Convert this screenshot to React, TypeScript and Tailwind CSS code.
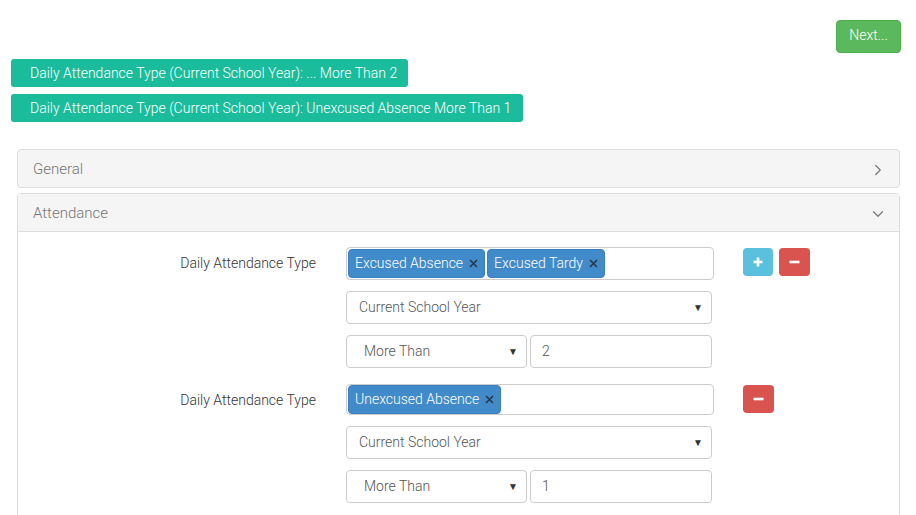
import { ChevronRight, ChevronDown } from "lucide-react"

const font = { fontFamily: "Roboto, 'Liberation Sans', sans-serif" }

function Chip({ label }: { label: string }) {
  return (
    <span className="flex h-[29px] items-center rounded-[4px] border border-[#3a7fc0] bg-[#428bca] pl-[6px] pr-[6px] text-[14px] text-white">
      {label}
      <svg className="ml-[6px]" width="9" height="9" viewBox="0 0 9 9">
        <path d="M1 1l7 7M8 1l-7 7" stroke="#24384c" strokeWidth="1.6" />
      </svg>
    </span>
  )
}

function Select({ value, className }: { value: string; className: string }) {
  return (
    <div
      className={`flex h-[33px] items-center justify-between rounded-[4px] border border-[#ccc] bg-white pr-[8px] text-[14px] text-[#555] ${className}`}
    >
      <span>{value}</span>
      <span className="text-[10px] text-[#333]">▼</span>
    </div>
  )
}

function Criteria({ chips, value, plus, boxH }: { chips: string[]; value: string; plus?: boolean; boxH: string }) {
  return (
    <div className="flex">
      <div className="w-[298px] shrink-0 pt-[6px] text-right text-[14px] text-[#333]">Daily Attendance Type</div>
      <div className="ml-[30px] flex w-[368px] flex-col gap-[11px]">
        <div className={`flex items-center gap-[2px] rounded-[4px] border border-[#ccc] bg-white px-[1px] ${boxH}`}>
          {chips.map((c) => (
            <Chip key={c} label={c} />
          ))}
        </div>
        <Select value="Current School Year" className="w-[366px] pl-[12px]" />
        <div className="flex gap-[3px]">
          <Select value="More Than" className="w-[181px] pl-[17px]" />
          <div className="flex h-[33px] w-[182px] items-center rounded-[4px] border border-[#ccc] bg-white pl-[11px] text-[14px] text-[#555]">
            {value}
          </div>
        </div>
      </div>
      <div className="ml-[29px] flex gap-[6px] pt-[1px]">
        {plus && (
          <button className="flex h-[28px] w-[30px] items-center justify-center rounded-[4px] bg-[#5bc0de] text-white">
            <svg width="10" height="10" viewBox="0 0 10 10">
              <path d="M5 0.5v9M0.5 5h9" stroke="white" strokeWidth="2.6" />
            </svg>
          </button>
        )}
        <button className="flex h-[28px] w-[31px] items-center justify-center rounded-[4px] bg-[#d9534f] text-white">
          <svg width="11" height="10" viewBox="0 0 11 10">
            <path d="M0.5 5h10" stroke="white" strokeWidth="2.6" />
          </svg>
        </button>
      </div>
    </div>
  )
}

export default function App() {
  return (
    <div className="min-h-[515px] w-full overflow-hidden bg-white font-light" style={font}>
      <div className="flex justify-end pr-[15px] pt-[20px]">
        <button className="h-[33px] w-[65px] rounded-[4px] border border-[#4cae4c] bg-[#5cb85c] pb-[2px] text-[14px] text-white">
          Next...
        </button>
      </div>

      <div className="mt-[6px] flex flex-col items-start gap-[7px] pl-[11px]">
        <span className="flex h-[28px] items-center rounded-[3px] bg-[#1abc9c] pl-[19px] pr-[11px] text-[14px] text-white">
          Daily Attendance Type (Current School Year): ... More Than 2
        </span>
        <span className="flex h-[28px] items-center rounded-[3px] bg-[#1abc9c] pl-[19px] pr-[12px] text-[14px] text-white">
          Daily Attendance Type (Current School Year): Unexcused Absence More Than 1
        </span>
      </div>

      <div className="ml-[17px] mr-[16px] mt-[27px] flex flex-col gap-[5px]">
        <div className="flex h-[39px] items-center justify-between rounded-[4px] border border-[#ddd] bg-[#f5f5f5] pl-[15px] pr-[12px] pt-[2px] text-[15px] text-[#777]">
          <span>General</span>
          <ChevronRight size={18} strokeWidth={1.6} color="#777" />
        </div>
        <div className="rounded-t-[4px] border border-[#ddd]">
          <div className="flex h-[38px] items-center justify-between border-b border-[#ddd] bg-[#f5f5f5] pl-[15px] pr-[12px] pt-[2px] text-[15px] text-[#777]">
            <span>Attendance</span>
            <ChevronDown size={18} strokeWidth={1.6} color="#777" />
          </div>
          <div className="flex flex-col gap-[16px] pb-[20px] pt-[15px]">
            <Criteria chips={["Excused Absence", "Excused Tardy"]} value="2" plus boxH="h-[33px]" />
            <Criteria chips={["Unexcused Absence"]} value="1" boxH="h-[31px]" />
          </div>
        </div>
      </div>
    </div>
  )
}
